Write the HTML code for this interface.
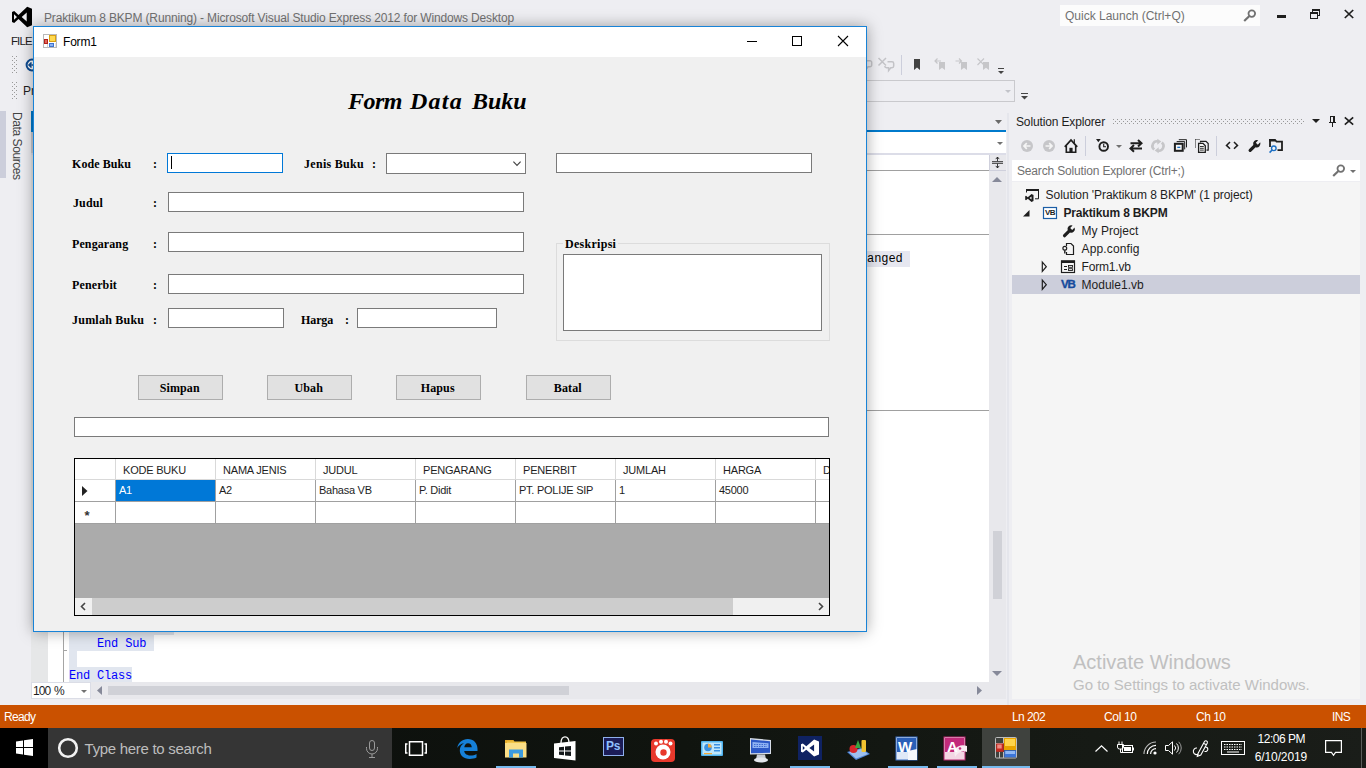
<!DOCTYPE html>
<html>
<head>
<meta charset="utf-8">
<title>Praktikum 8 BKPM</title>
<style>
html,body{margin:0;padding:0;}
body{width:1366px;height:768px;overflow:hidden;position:relative;background:#eeeef2;font-family:"Liberation Sans",sans-serif;font-size:12px;color:#1e1e1e;}
.a{position:absolute;}
.t{position:absolute;white-space:nowrap;line-height:1;}
.ui{font-family:"Liberation Sans",sans-serif;}
.serif{font-family:"Liberation Serif",serif;}
.mono{font-family:"Liberation Mono",monospace;}
svg{position:absolute;overflow:visible;}
/* form */
#form{position:absolute;left:33px;top:26px;width:832px;height:604px;border:1px solid #1883d7;background:#f0f0f0;box-shadow:0 0 14px rgba(0,0,0,.35);}
#ftitle{position:absolute;left:0;top:0;width:832px;height:30px;background:#fff;}
.tb{position:absolute;background:#fff;border:1px solid #7a7a7a;box-sizing:border-box;}
.lbl{position:absolute;white-space:nowrap;line-height:1;font-family:"Liberation Serif",serif;font-weight:bold;font-size:12px;color:#000;}
.btn{position:absolute;box-sizing:border-box;background:#e1e1e1;border:1px solid #adadad;font-family:"Liberation Serif",serif;font-weight:bold;font-size:12px;color:#000;text-align:center;line-height:24px;padding-right:1.500px;letter-spacing:0.100px;}
.gh{position:absolute;top:0;height:21px;box-sizing:border-box;border-right:1px solid #a0a0a0;border-bottom:1px solid #a0a0a0;background:#fff;font-size:11px;line-height:22.500px;padding-left:7px;letter-spacing:-0.200px;white-space:nowrap;overflow:hidden;}
.gc{position:absolute;height:22px;box-sizing:border-box;border-right:1px solid #a0a0a0;border-bottom:1px solid #a0a0a0;background:#fff;font-size:11px;line-height:21.500px;padding-left:3px;letter-spacing:-0.250px;white-space:nowrap;overflow:hidden;}
</style>
</head>
<body>
<!-- ===== IDE chrome ===== -->
<div id="ide">
<svg style="left:0;top:0" width="40" height="30" viewBox="0 0 40 30"><path d="M27.200 6.700 L32 8.800 V25.200 L27.200 27.300 L18.500 19.100 L14.200 22.900 L12 21.900 V12.100 L14.200 11.100 L18.500 14.900 Z M26.700 12.400 L21.700 17 L26.700 21.600 Z M14 14.200 V19.800 L17 17 Z" fill="#000" fill-rule="evenodd"/></svg>
<div class="t ui" id="vstitle" style="left:44px;top:12px;font-size:12px;color:#717171;letter-spacing:-0.148px;">Praktikum 8 BKPM (Running) - Microsoft Visual Studio Express 2012 for Windows Desktop</div>
<div class="a" style="left:1060px;top:5px;width:200px;height:21px;background:#fcfcfc;"></div>
<div class="t ui" id="ql" style="left:1065px;top:10px;font-size:12px;color:#717171;">Quick Launch (Ctrl+Q)</div>
<svg style="left:1243px;top:9px" width="14" height="13" viewBox="0 0 14 13"><circle cx="8.8" cy="4.6" r="3.3" fill="none" stroke="#717171" stroke-width="1.8"/><path d="M6.4 7 L1.2 12" stroke="#717171" stroke-width="2.2"/></svg>
<div class="a" style="left:1277px;top:15px;width:9px;height:3px;background:#1e1e1e;"></div>
<svg style="left:1310px;top:9px" width="10" height="10" viewBox="0 0 10 10" shape-rendering="crispEdges"><path d="M2.5 2.5 V0.5 H9.5 V6.5 H7.5" fill="none" stroke="#1e1e1e"/><rect x="2" y="0" width="8" height="2" fill="#1e1e1e"/><rect x="0.5" y="3.5" width="7" height="6" fill="none" stroke="#1e1e1e"/><rect x="0" y="3" width="8" height="2" fill="#1e1e1e"/></svg>
<svg style="left:1344px;top:10px" width="10" height="8" viewBox="0 0 10 8"><path d="M0.8 0 L9.2 8 M9.2 0 L0.8 8" stroke="#1e1e1e" stroke-width="1.7"/></svg>
<div class="t ui" style="left:11px;top:35.500px;font-size:11.500px;color:#1e1e1e;letter-spacing:-0.900px;">FILE</div>
<svg style="left:12px;top:56px" width="5" height="18" viewBox="0 0 5 18"><defs><pattern id="gp1" width="4" height="4" patternUnits="userSpaceOnUse"><rect x="0" y="0" width="1" height="1" fill="#999"/><rect x="2" y="2" width="1" height="1" fill="#999"/></pattern></defs><rect width="5" height="18" fill="url(#gp1)"/></svg>
<svg style="left:12px;top:82px" width="5" height="18" viewBox="0 0 5 18"><defs><pattern id="gp2" width="4" height="4" patternUnits="userSpaceOnUse"><rect x="0" y="0" width="1" height="1" fill="#999"/><rect x="2" y="2" width="1" height="1" fill="#999"/></pattern></defs><rect width="5" height="18" fill="url(#gp2)"/></svg>
<svg style="left:25px;top:58px" width="14" height="14" viewBox="0 0 14 14"><circle cx="7" cy="7" r="5.400" fill="#fff" stroke="#0e4c92" stroke-width="2"/><path d="M10 7 H4 M6.5 4.5 L4 7 L6.5 9.5" stroke="#0e4c92" stroke-width="1.6" fill="none"/></svg>
<div class="t ui" style="left:23px;top:85px;font-size:12px;color:#1e1e1e;">Pr</div>
<svg style="left:866px;top:55px" width="150" height="22" viewBox="866 55 150 22">
<path d="M866 60.800 H870 a1.700 1.700 0 0 1 1.700 1.700 V65 a1.700 1.700 0 0 1 -1.700 1.700 H868 L866 69.500" fill="none" stroke="#c3c3c7" stroke-width="1.500"/>
<path d="M878.500 58 L886 65.500 M886 58 L878.500 65.500" stroke="#c3c3c7" stroke-width="1.500" fill="none"/>
<path d="M887.500 61.800 H892 a1.700 1.700 0 0 1 1.700 1.700 V66 a1.700 1.700 0 0 1 -1.700 1.700 H890.800 L888.600 70.500 V67.700 H886.500 a1.700 1.700 0 0 1 -1.700 -1.700" fill="none" stroke="#c3c3c7" stroke-width="1.500"/>
<rect x="901" y="55" width="1" height="20" fill="#cccedb"/>
<path d="M914 59 H920 V70 L917 67.5 L914 70 Z" fill="#424242"/>
<path d="M939 62 H945 V70 L942 67.8 L939 70 Z" fill="#c6c6c9"/><path d="M941 61 H935.5 M937.5 58.5 L935 61 L937.5 63.5" stroke="#c6c6c9" stroke-width="1.2" fill="none"/>
<path d="M961 62 H967 V70 L964 67.8 L961 70 Z" fill="#c6c6c9"/><path d="M955.5 61 H961 M959 58.5 L961.5 61 L959 63.5" stroke="#c6c6c9" stroke-width="1.2" fill="none"/>
<path d="M983 62 H989 V70 L986 67.8 L983 70 Z" fill="#c6c6c9"/><path d="M977.5 58.5 L984 65 M984 58.5 L977.5 65" stroke="#c6c6c9" stroke-width="1.1" fill="none"/>
<rect x="998" y="68" width="6" height="1" fill="#444"/><path d="M998 71 H1004 L1001 74 Z" fill="#444"/>
</svg>
<div class="a" style="left:40px;top:80px;width:975px;height:22px;box-sizing:border-box;border:1px solid #c9c9cd;background:#eeeef2;"></div>
<svg style="left:1005px;top:90px" width="6" height="3" viewBox="0 0 6 3"><path d="M0 0 H6 L3 3 Z" fill="#c2c3c9"/></svg>
<svg style="left:1021px;top:93px" width="7" height="7" viewBox="0 0 7 7"><rect x="0" y="0" width="7" height="1" fill="#444"/><path d="M0 3 H7 L3.5 6.5 Z" fill="#444"/></svg>
<div class="a" style="left:0;top:111px;width:6px;height:67px;background:#cccedb;"></div>
<div class="t ui" id="ds" style="left:9px;top:112px;font-size:12px;color:#444;transform-origin:0 0;transform:translate(14px,0) rotate(90deg);letter-spacing:-0.420px;">Data Sources</div>
<div class="a" style="left:31px;top:111px;width:3px;height:20px;background:#007acc;"></div>
<div class="a" style="left:31px;top:130px;width:975px;height:2px;background:#007acc;"></div>
<svg style="left:995px;top:120px" width="7" height="4" viewBox="0 0 7 4"><path d="M0 0 H7 L3.500 4 Z" fill="#6a6a6a"/></svg>
<div class="a" style="left:31px;top:132px;width:975px;height:21px;background:#fff;"></div>
<div class="a" style="left:31px;top:153px;width:975px;height:2px;background:#dcdde8;"></div>
<svg style="left:997px;top:142px" width="6" height="3" viewBox="0 0 6 3"><path d="M0 0 H6 L3 3 Z" fill="#717171"/></svg>
<div class="a" id="editor" style="left:31px;top:155px;width:958px;height:527px;background:#fff;"></div>
<div class="a" style="left:31px;top:155px;width:17px;height:527px;background:#e6e7e8;"></div>
<div class="a" style="left:48px;top:170px;width:941px;height:1px;background:#a0a0a0;"></div>
<div class="a" style="left:48px;top:234px;width:941px;height:1px;background:#a0a0a0;"></div>
<div class="a" style="left:48px;top:410px;width:941px;height:1px;background:#a0a0a0;"></div>
<div class="a" style="left:860px;top:251px;width:50px;height:16px;background:#e6e7f0;"></div>
<div class="t mono" style="left:867px;top:253px;font-size:12px;color:#000;letter-spacing:-0.050px;">anged</div>
<div class="a" style="left:63px;top:600px;width:1px;height:82px;background:#a5a5a5;"></div>
<div class="a" style="left:63px;top:650px;width:4px;height:1px;background:#a5a5a5;"></div>
<div class="a" style="left:69px;top:625px;width:105px;height:10px;background:#e1e6ef;"></div>
<div class="a" style="left:69px;top:635px;width:85px;height:16px;background:#e1e6ef;"></div>
<div class="a" style="left:69px;top:651px;width:8px;height:16px;background:#e1e6ef;"></div>
<div class="a" style="left:69px;top:667px;width:63px;height:15px;background:#e1e6ef;"></div>
<div class="t mono" style="left:97px;top:638px;font-size:12px;color:#0000ff;letter-spacing:-0.150px;">End Sub</div>
<div class="t mono" style="left:69px;top:670px;font-size:12px;color:#0000ff;letter-spacing:-0.200px;">End Class</div>
<div class="a" style="left:989px;top:155px;width:17px;height:527px;background:#e8e8ec;"></div>
<svg style="left:992px;top:155px" width="11" height="15" viewBox="0 0 13 15"><path d="M0 6.5 H13 M0 8.5 H13 M6.5 1 V6 M6.5 9 V14" stroke="#1e1e1e" fill="none"/><path d="M4.5 3.5 L6.5 1 L8.5 3.5 M4.5 11.5 L6.5 14 L8.5 11.5" stroke="#1e1e1e" fill="none"/></svg>
<svg style="left:992px;top:177px" width="10" height="5" viewBox="0 0 10 5"><path d="M0 5 H10 L5 0 Z" fill="#868999"/></svg>
<div class="a" style="left:993px;top:531px;width:9px;height:68px;background:#d0d1d7;"></div>
<svg style="left:992px;top:671px" width="10" height="5" viewBox="0 0 10 5"><path d="M0 0 H10 L5 5 Z" fill="#868999"/></svg>
<div class="a" style="left:31px;top:682px;width:975px;height:17px;background:#e8e8ec;"></div>
<div class="a" style="left:31px;top:682px;width:60px;height:17px;background:#fff;border:1px solid #dbdde6;box-sizing:border-box;"></div>
<div class="t ui" style="left:33px;top:685px;font-size:12px;color:#1e1e1e;letter-spacing:-0.950px;word-spacing:1.500px;">100 %</div>
<svg style="left:81px;top:690px" width="6" height="3" viewBox="0 0 6 3"><path d="M0 0 H6 L3 3 Z" fill="#717171"/></svg>
<svg style="left:97px;top:686px" width="5" height="9" viewBox="0 0 5 9"><path d="M5 0 V9 L0 4.5 Z" fill="#868999"/></svg>
<div class="a" style="left:108px;top:686px;width:461px;height:9px;background:#d0d1d7;"></div>
<svg style="left:977px;top:686px" width="5" height="9" viewBox="0 0 5 9"><path d="M0 0 V9 L5 4.5 Z" fill="#868999"/></svg>
<div class="t ui" id="se_t" style="left:1016px;top:116px;font-size:12px;color:#1e1e1e;letter-spacing:-0.140px;">Solution Explorer</div>
<svg style="left:1113px;top:119px" width="191" height="5" viewBox="0 0 191 5"><defs><pattern id="gp3" width="4" height="4" patternUnits="userSpaceOnUse"><rect x="0" y="0" width="1" height="1" fill="#999"/><rect x="2" y="2" width="1" height="1" fill="#999"/></pattern></defs><rect width="191" height="5" fill="url(#gp3)"/></svg>
<svg style="left:1312px;top:119px" width="8" height="4" viewBox="0 0 8 4"><path d="M0 0 H8 L4 4 Z" fill="#1e1e1e"/></svg>
<svg style="left:1329px;top:116px" width="8" height="11" viewBox="0 0 8 11" shape-rendering="crispEdges"><rect x="1" y="0" width="5" height="1" fill="#1e1e1e"/><rect x="1" y="0" width="1" height="6" fill="#1e1e1e"/><rect x="4" y="0" width="2" height="6" fill="#1e1e1e"/><rect x="0" y="6" width="7" height="1" fill="#1e1e1e"/><rect x="3" y="7" width="1" height="4" fill="#1e1e1e"/></svg>
<svg style="left:1344px;top:117px" width="10" height="8" viewBox="0 0 10 8"><path d="M0.800 0.300 L9.200 7.700 M9.200 0.300 L0.800 7.700" stroke="#1e1e1e" stroke-width="1.600"/></svg>
<svg style="left:1012px;top:134px" width="300" height="24" viewBox="1012 135 300 24">
<circle cx="1027" cy="147" r="6" fill="#c6c6c9"/><path d="M1030.500 147 H1024 M1026.800 144.200 L1024 147 L1026.800 149.800" stroke="#f5f5f5" stroke-width="1.700" fill="none"/>
<circle cx="1049" cy="147" r="6" fill="#c6c6c9"/><path d="M1045.500 147 H1052 M1049.200 144.200 L1052 147 L1049.200 149.800" stroke="#f5f5f5" stroke-width="1.700" fill="none"/>
<path d="M1064.800 147.800 L1071 141 L1077.200 147.800" stroke="#1e1e1e" stroke-width="1.800" fill="none"/><path d="M1066.300 147 V153.300 H1075.700 V147" stroke="#1e1e1e" stroke-width="1.600" fill="none"/><rect x="1069.400" y="148.800" width="3.200" height="4.500" fill="#1e1e1e"/><path d="M1074.300 140.300 V144" stroke="#1e1e1e" stroke-width="1.200"/>
<rect x="1085" y="137" width="1" height="20" fill="#cccedb"/>
<circle cx="1103.700" cy="147.500" r="4.300" fill="none" stroke="#1e1e1e" stroke-width="1.900"/><path d="M1103.700 144.800 V147.700 H1106" stroke="#1e1e1e" stroke-width="1.100" fill="none"/><path d="M1096 140 H1100.700 L1098.350 143.300 Z" fill="#1e1e1e"/>
<path d="M1116 146 H1122 L1119 149 Z" fill="#717171"/>
<path d="M1130.500 144.200 H1141 M1138 140.900 L1141.500 144.200 L1138 147.500" stroke="#1e1e1e" stroke-width="2" fill="none"/><path d="M1142 149.400 H1131 M1134 146.100 L1130.500 149.400 L1134 152.700" stroke="#1e1e1e" stroke-width="2" fill="none"/>
<path d="M1154.200 150.500 A4.600 4.600 0 0 1 1158 142.400" stroke="#c6c6c9" stroke-width="2.600" fill="none"/><path d="M1161.800 143.500 A4.600 4.600 0 0 1 1158 151.600" stroke="#c6c6c9" stroke-width="2.600" fill="none"/><path d="M1157.300 139.800 L1161.300 142.600 L1157.300 145.800 Z" fill="#c6c6c9"/><path d="M1158.700 148.200 L1154.700 151.400 L1158.700 154.200 Z" fill="#c6c6c9"/>
<path d="M1178.800 140.700 H1186.500 V148.400" stroke="#1e1e1e" stroke-width="1" fill="none"/><path d="M1176.700 142.600 H1184.700 V150.400" stroke="#1e1e1e" stroke-width="1" fill="none"/><rect x="1174.900" y="144.800" width="7.800" height="7" fill="#f5f5f5" stroke="#1e1e1e" stroke-width="2"/><rect x="1177.300" y="147.700" width="3" height="1.300" fill="#1c6fc4"/>
<path d="M1195.500 140.500 H1200" stroke="#1e1e1e" stroke-dasharray="1 1" fill="none"/><path d="M1195.500 140.500 V149" stroke="#1e1e1e" stroke-dasharray="1 1" fill="none"/>
<path d="M1200.500 143.500 V142.300 H1206 L1208.200 144.500 V151.200 H1206.500" stroke="#1e1e1e" stroke-width="1.200" fill="none"/><path d="M1198.600 144.400 H1203 L1205.300 146.700 V153.300 H1198.600 Z" stroke="#1e1e1e" stroke-width="1.300" fill="#f5f5f5"/><path d="M1200 147.500 H1203.800 M1200 149.300 H1203.800 M1200 151.100 H1203.800" stroke="#1e1e1e" stroke-width="0.900" fill="none"/>
<rect x="1216" y="137" width="1" height="20" fill="#cccedb"/>
<path d="M1230 143 L1226.500 146.400 L1230 149.800 M1234 143 L1237.500 146.400 L1234 149.800" stroke="#1e1e1e" stroke-width="1.500" fill="none"/>
<path d="M1258.200 141.300 a3.700 3.700 0 0 0 -4.900 4.600 L1249 150.200 a1.600 1.600 0 0 0 2.300 2.300 L1255.600 148.200 a3.700 3.700 0 0 0 4.600 -4.900 L1257.800 145.700 L1255.800 143.700 Z" fill="#1e1e1e"/>
<path d="M1273 141 H1270 V148" stroke="#1e1e1e" stroke-width="1.800" fill="none"/><path d="M1269.100 141 H1275 L1276.500 142.600 H1282 V151.200 H1277.500" stroke="#1e1e1e" stroke-width="1.800" fill="none"/><rect x="1269.100" y="140.100" width="6" height="2.400" fill="#1e1e1e"/><circle cx="1273.800" cy="149.300" r="2.300" fill="#f5f5f5" stroke="#1c6fc4" stroke-width="1.400"/><path d="M1272.100 151 L1269.600 153.600" stroke="#1c6fc4" stroke-width="1.600"/>
</svg>
<div class="a" style="left:1012px;top:160px;width:348px;height:21px;background:#fff;"></div>
<div class="t ui" id="se_s" style="left:1017px;top:165px;font-size:12px;color:#717171;letter-spacing:-0.165px;">Search Solution Explorer (Ctrl+;)</div>
<svg style="left:1332px;top:164px" width="14" height="13" viewBox="0 0 14 13"><circle cx="8.8" cy="4.600" r="3.300" fill="none" stroke="#717171" stroke-width="1.800"/><path d="M6.400 7 L1.200 12" stroke="#717171" stroke-width="2.200"/></svg>
<svg style="left:1350px;top:170px" width="6" height="3" viewBox="0 0 6 3"><path d="M0 0 H6 L3 3 Z" fill="#717171"/></svg>
<div class="a" style="left:1012px;top:182px;width:348px;height:517px;background:#f5f5f5;"></div>
<div class="a" style="left:1012px;top:275px;width:348px;height:19px;background:#cccedb;"></div>
<svg style="left:1012px;top:186px" width="100" height="110" viewBox="1012 186 100 110">
<path d="M1026.500 192.500 V189.500 H1038.500 V198.800 H1035" stroke="#1e1e1e" stroke-width="1" fill="none"/><rect x="1026" y="189" width="13" height="2" fill="#1e1e1e"/>
<path d="M1031.500 194 L1033.500 195 V201 L1031.500 202 L1027.800 198.800 L1026 200.200 L1025.200 199.800 V196.200 L1026 195.800 L1027.800 197.200 Z M1031.500 196.500 L1029.500 198 L1031.500 199.500 Z" fill="#1e1e1e" fill-rule="evenodd"/>
<path d="M1029.500 210 V216.500 H1023 Z" fill="#1e1e1e"/>
<rect x="1043.500" y="207.500" width="13" height="11" fill="#fff" stroke="#1b5ea6" stroke-width="1.200"/>
<path d="M1063 284 l0 0" />
<path transform="translate(-185.600,84.300)" d="M1258.200 141.300 a3.700 3.700 0 0 0 -4.900 4.600 L1249 150.200 a1.600 1.600 0 0 0 2.300 2.300 L1255.600 148.200 a3.700 3.700 0 0 0 4.600 -4.900 L1257.800 145.700 L1255.800 143.700 Z" fill="#1e1e1e"/>
<path d="M1066.500 246 V243.500 H1071 L1073.500 246 V254.500 H1066.500 V252" stroke="#1e1e1e" stroke-width="1.200" fill="none"/><circle cx="1064.800" cy="248.300" r="1.900" fill="none" stroke="#1e1e1e" stroke-width="1.200"/><path d="M1064.800 250.200 V253.500" stroke="#1e1e1e" stroke-width="1.400"/>
<path d="M1042.300 262 V271.300 L1046.300 266.650 Z" stroke="#1e1e1e" stroke-width="1.200" fill="none"/>
<rect x="1061.500" y="261" width="13" height="11.500" fill="none" stroke="#1e1e1e" stroke-width="1.200"/><rect x="1061" y="260.500" width="14" height="2.500" fill="#1e1e1e"/><path d="M1064 266.500 H1067 M1064 269.500 H1067" stroke="#1e1e1e" stroke-width="1.200"/><rect x="1068.500" y="265.500" width="4" height="1.800" fill="none" stroke="#1e1e1e" stroke-width="0.900"/><rect x="1068.500" y="268.700" width="4" height="1.800" fill="none" stroke="#1e1e1e" stroke-width="0.900"/>
<path d="M1042.300 280 V289.300 L1046.300 284.650 Z" stroke="#1e1e1e" stroke-width="1.200" fill="none"/>
</svg>
<div class="t ui" style="left:1045px;top:209px;font-size:8px;font-weight:bold;color:#1e1e1e;letter-spacing:-0.5px;">VB</div>
<div class="t ui" style="left:1061px;top:279px;font-size:11.500px;font-weight:bold;color:#164a9c;-webkit-text-stroke:0.350px #164a9c;letter-spacing:-1.100px;">VB</div>
<div class="t ui" id="tr1" style="left:1045.600px;top:189px;font-size:12px;color:#1e1e1e;letter-spacing:-0.056px;">Solution 'Praktikum 8 BKPM' (1 project)</div>
<div class="t ui" id="tr2" style="left:1063.400px;top:207px;font-size:12px;font-weight:bold;color:#1e1e1e;letter-spacing:-0.160px;">Praktikum 8 BKPM</div>
<div class="t ui" id="tr3" style="left:1081.600px;top:225px;font-size:12px;color:#1e1e1e;">My Project</div>
<div class="t ui" id="tr4" style="left:1081.600px;top:243px;font-size:12px;color:#1e1e1e;letter-spacing:0.120px;">App.config</div>
<div class="t ui" id="tr5" style="left:1081.600px;top:261px;font-size:12px;color:#1e1e1e;letter-spacing:-0.200px;">Form1.vb</div>
<div class="t ui" id="tr6" style="left:1081.600px;top:279px;font-size:12px;color:#1e1e1e;">Module1.vb</div>
<div class="t ui" id="aw1" style="left:1073px;top:652px;font-size:20px;color:#c0c0c0;">Activate Windows</div>
<div class="t ui" id="aw2" style="left:1073px;top:677px;font-size:15px;color:#c0c0c0;">Go to Settings to activate Windows.</div>
</div>
<div class="a" style="left:31px;top:132px;width:2px;height:21px;background:#c9cad0;"></div>
<div class="a" style="left:1007px;top:113px;width:2px;height:592px;background:#e5e6ec;"></div>
<div class="a" style="left:989px;top:155px;width:1px;height:16px;background:#cfd0dc;"></div>
<div class="a" style="left:989px;top:170px;width:17px;height:1px;background:#cfd0dc;"></div>
<!-- ===== Form window ===== -->
<div id="form">
<div id="ftitle"></div>
<svg style="left:9px;top:7px" width="14" height="14" viewBox="0 0 14 14">
<rect x="0.5" y="0.5" width="13" height="13" fill="#fff" stroke="#b9b9b9"/>
<rect x="6" y="1" width="7" height="7" fill="#d9a013"/><rect x="7" y="2" width="5" height="5" fill="#ffd94f"/>
<rect x="1" y="5" width="4" height="5" fill="#b3221a"/><rect x="2" y="6" width="2" height="3" fill="#e0655c"/>
<rect x="6" y="9" width="5" height="4" fill="#3f73cf"/><rect x="7" y="10" width="3" height="2" fill="#8db3f0"/>
<rect x="4" y="10" width="1" height="3" fill="#d0d0d0"/><rect x="12" y="9" width="1" height="4" fill="#e4e4e4"/>
</svg>
<div class="t ui" style="left:29px;top:9px;font-size:12px;color:#000;letter-spacing:-0.2px;">Form1</div>
<svg style="left:706px;top:3px" width="120" height="24" viewBox="740 30 120 24" shape-rendering="crispEdges">
<rect x="747" y="41" width="10" height="1" fill="#000"/>
<rect x="792.5" y="36.5" width="9" height="9" fill="none" stroke="#000" stroke-width="1"/>
<path d="M838 36 L848 46 M848 36 L838 46" stroke="#000" stroke-width="1.1" fill="none" shape-rendering="geometricPrecision"/>
</svg>
<div class="a serif" id="heading" style="left:0;top:61.500px;width:832px;height:30px;font-size:24px;font-weight:bold;font-style:italic;color:#000;line-height:1;white-space:nowrap;"><span class="a" id="h1" style="left:314px;top:0;letter-spacing:-0.5px;">Form</span> <span class="a" id="h2" style="left:376px;top:0;letter-spacing:1.25px;">Data</span> <span class="a" id="h3" style="left:438px;top:0;letter-spacing:0px;">Buku</span></div>
<div class="lbl" style="left:38px;top:131px;letter-spacing:0.07px;">Kode Buku</div>
<div class="lbl" style="left:119px;top:131px;">:</div>
<div class="lbl" style="left:270px;top:131px;letter-spacing:0.30px;">Jenis Buku</div>
<div class="lbl" style="left:338px;top:131px;">:</div>
<div class="lbl" style="left:39px;top:170px;letter-spacing:0.12px;">Judul</div>
<div class="lbl" style="left:119px;top:170px;">:</div>
<div class="lbl" style="left:38px;top:211px;letter-spacing:0.10px;">Pengarang</div>
<div class="lbl" style="left:119px;top:211px;">:</div>
<div class="lbl" style="left:38px;top:252px;letter-spacing:0.12px;">Penerbit</div>
<div class="lbl" style="left:119px;top:252px;">:</div>
<div class="lbl" style="left:38px;top:287px;letter-spacing:0.23px;">Jumlah Buku</div>
<div class="lbl" style="left:119px;top:287px;">:</div>
<div class="lbl" style="left:267px;top:287px;letter-spacing:-0.10px;">Harga</div>
<div class="lbl" style="left:311px;top:287px;">:</div>
<div class="tb" style="left:133px;top:126px;width:116px;height:20px;border-color:#0078d7;"></div>
<div class="a" style="left:137px;top:129px;width:1px;height:13px;background:#000;"></div>
<div class="tb" style="left:352px;top:126px;width:140px;height:21px;"></div>
<svg style="left:478.500px;top:134px" width="8" height="6" viewBox="0 0 8 6"><path d="M0.400 0.600 L4 4.400 L7.600 0.600" stroke="#444" stroke-width="1.150" fill="none"/></svg>
<div class="tb" style="left:522px;top:126px;width:256px;height:20px;"></div>
<div class="tb" style="left:134px;top:165px;width:356px;height:20px;"></div>
<div class="tb" style="left:134px;top:205px;width:356px;height:20px;"></div>
<div class="tb" style="left:134px;top:247px;width:356px;height:20px;"></div>
<div class="tb" style="left:134px;top:281px;width:116px;height:20px;"></div>
<div class="tb" style="left:323px;top:281px;width:140px;height:20px;"></div>
<div class="a" style="left:522px;top:216px;width:274px;height:98px;border:1px solid #dcdcdc;box-sizing:border-box;"></div>
<div class="lbl" style="left:529px;top:211px;background:#f0f0f0;padding:0 2px;letter-spacing:0.28px;">Deskripsi</div>
<div class="tb" style="left:529px;top:227px;width:259px;height:77px;"></div>
<div class="btn" style="left:104px;top:348px;width:85px;height:25px;">Simpan</div>
<div class="btn" style="left:233px;top:348px;width:85px;height:25px;">Ubah</div>
<div class="btn" style="left:362px;top:348px;width:85px;height:25px;">Hapus</div>
<div class="btn" style="left:492px;top:348px;width:85px;height:25px;">Batal</div>
<div class="tb" style="left:40px;top:390px;width:755px;height:20px;"></div>
<div class="a" id="grid" style="left:40px;top:431px;width:756px;height:158px;box-sizing:border-box;border:1px solid #000;background:#ababab;overflow:hidden;">
<div class="gh" style="left:0;width:41px;border-color:#d9d9d9;"></div>
<div class="gh" style="left:41px;width:100px;border-color:#d9d9d9;">KODE BUKU</div>
<div class="gh" style="left:141px;width:100px;border-color:#d9d9d9;">NAMA JENIS</div>
<div class="gh" style="left:241px;width:100px;border-color:#d9d9d9;">JUDUL</div>
<div class="gh" style="left:341px;width:100px;border-color:#d9d9d9;">PENGARANG</div>
<div class="gh" style="left:441px;width:100px;border-color:#d9d9d9;">PENERBIT</div>
<div class="gh" style="left:541px;width:100px;border-color:#d9d9d9;">JUMLAH</div>
<div class="gh" style="left:641px;width:100px;border-color:#d9d9d9;">HARGA</div>
<div class="gh" style="left:741px;width:100px;border-color:#d9d9d9;">DESKRIPSI</div>
<div class="gc" style="left:0;top:21px;width:41px;"></div>
<div class="gc" style="left:0;top:43px;width:41px;"></div>
<div class="gc" style="left:41px;top:21px;width:100px;background:#0078d7;color:#fff;">A1</div>
<div class="gc" style="left:41px;top:43px;width:100px;"></div>
<div class="gc" style="left:141px;top:21px;width:100px;">A2</div>
<div class="gc" style="left:141px;top:43px;width:100px;"></div>
<div class="gc" style="left:241px;top:21px;width:100px;">Bahasa VB</div>
<div class="gc" style="left:241px;top:43px;width:100px;"></div>
<div class="gc" style="left:341px;top:21px;width:100px;">P. Didit</div>
<div class="gc" style="left:341px;top:43px;width:100px;"></div>
<div class="gc" style="left:441px;top:21px;width:100px;">PT. POLIJE SIP</div>
<div class="gc" style="left:441px;top:43px;width:100px;"></div>
<div class="gc" style="left:541px;top:21px;width:100px;">1</div>
<div class="gc" style="left:541px;top:43px;width:100px;"></div>
<div class="gc" style="left:641px;top:21px;width:100px;">45000</div>
<div class="gc" style="left:641px;top:43px;width:100px;"></div>
<div class="gc" style="left:741px;top:21px;width:100px;"></div>
<div class="gc" style="left:741px;top:43px;width:100px;"></div>
<svg style="left:7px;top:27px" width="6" height="10" viewBox="0 0 6 10"><path d="M0 0 L5.5 5 L0 10 Z" fill="#222"/></svg>
<div class="t" style="left:9.500px;top:50px;font-size:13px;font-weight:bold;color:#333;">*</div>
<div class="a" style="left:0;top:139px;width:754px;height:17px;background:#f0f0f0;"></div>
<div class="a" style="left:17px;top:139px;width:641px;height:17px;background:#cdcdcd;"></div>
<svg style="left:5px;top:143px" width="6" height="9" viewBox="0 0 6 9"><path d="M5 1 L1.5 4.5 L5 8" stroke="#444" stroke-width="1.6" fill="none"/></svg>
<svg style="left:743px;top:143px" width="6" height="9" viewBox="0 0 6 9"><path d="M1 1 L4.5 4.5 L1 8" stroke="#444" stroke-width="1.6" fill="none"/></svg>
</div>
</div>
<!-- ===== status bar ===== -->
<div class="a" id="status" style="left:0;top:705px;width:1366px;height:23px;background:#ca5100;"><div class="t ui" id="st0" style="left:4px;top:6px;font-size:12px;color:#fff;letter-spacing:-0.680px;">Ready</div>
<div class="t ui" id="st1" style="left:1012px;top:6px;font-size:12px;color:#fff;letter-spacing:-0.600px;">Ln 202</div>
<div class="t ui" id="st2" style="left:1104px;top:6px;font-size:12px;color:#fff;letter-spacing:-0.330px;">Col 10</div>
<div class="t ui" id="st3" style="left:1196px;top:6px;font-size:12px;color:#fff;letter-spacing:-0.500px;">Ch 10</div>
<div class="t ui" id="st4" style="left:1332px;top:6px;font-size:12px;color:#fff;letter-spacing:-0.670px;">INS</div></div>
<!-- ===== taskbar ===== -->
<div class="a" id="taskbar" style="left:0;top:728px;width:1366px;height:40px;background:linear-gradient(90deg,#0a0d0b 0%,#10140f 50%,#161a15 80%,#1a1d19 100%);"><div class="a" style="left:0;top:0;width:48px;height:40px;background:#000;"></div>
<svg style="left:16px;top:11px" width="17" height="17" viewBox="0 0 17 17"><path d="M0 2.400 L7 1.400 V8 H0 Z M8 1.250 L17 0 V8 H8 Z M0 9 H7 V15.600 L0 14.600 Z M8 9 H17 V17 L8 15.750 Z" fill="#fff"/></svg>
<div class="a" style="left:48px;top:0;width:344px;height:40px;background:#353535;"></div>
<svg style="left:57px;top:9px" width="22" height="22" viewBox="0 0 22 22"><circle cx="11" cy="11" r="8.800" fill="none" stroke="#f2f2f2" stroke-width="2.600"/></svg>
<div class="t ui" id="tk_s" style="left:84.600px;top:13px;font-size:15px;color:#bdbdbd;letter-spacing:-0.300px;">Type here to search</div>
<svg style="left:365px;top:12px" width="14" height="18" viewBox="0 0 14 18"><rect x="4.500" y="0.500" width="5" height="10" rx="2.500" fill="none" stroke="#9a9a9a" stroke-width="1"/><path d="M1.500 7 V8.500 a5.500 5.500 0 0 0 11 0 V7 M7 14 V17 M4 17.500 H10" fill="none" stroke="#9a9a9a" stroke-width="1"/></svg>
<svg style="left:405px;top:13px" width="22" height="15" viewBox="0 0 22 15"><rect x="4.500" y="0.750" width="13" height="13.500" fill="none" stroke="#fff" stroke-width="1.500"/><path d="M2.500 3 H0.750 V12 H2.500 M19.500 3 H21.250 V12 H19.500" fill="none" stroke="#fff" stroke-width="1.500"/></svg>
<svg style="left:457px;top:11px" width="21" height="20" viewBox="0 0 21 20"><path d="M0.300 9 C1 3.500 5.500 0 10.800 0 C16.500 0 20.500 4 20.500 10 V12 H7.200 C7.500 15 10.500 16.500 13.500 16.500 C15.800 16.500 17.800 15.900 19.500 14.900 V18.600 C17.500 19.600 15.300 20 12.800 20 C6.500 20 2.800 16.300 2.800 11.300 C2.800 8 4.500 5.600 7 4.300 C3.800 4.800 1.500 6.700 0.300 9 Z M7.300 8.300 H14.800 C14.700 5.800 13.200 4.200 11 4.200 C8.800 4.200 7.600 6 7.300 8.300 Z" fill="#1680d8" fill-rule="evenodd"/></svg>
<svg style="left:505px;top:11px" width="22" height="19" viewBox="0 0 22 19"><path d="M0 1 H8 L9.500 2.500 H21 V18 H0 Z" fill="#f3c84b"/><path d="M0 4 H21.500 V18.500 H0 Z" fill="#fbdf87"/><path d="M0 1 H8 L9.500 2.500 H2 V4 H0 Z" fill="#e6ad2b"/><rect x="4" y="10.500" width="14" height="8" fill="#3c9be0"/><rect x="8" y="14.500" width="6" height="4" fill="#fbdf87"/></svg>
<div class="a" style="left:496px;top:38px;width:40px;height:2px;background:#76b9ed;"></div>
<svg style="left:554px;top:8px" width="22" height="25" viewBox="0 0 22 25"><path d="M7 7 C7 2.500 9 0.800 11 0.800 C13 0.800 15 2.500 15 7" fill="none" stroke="#fff" stroke-width="1.300"/><path d="M0 7.500 L21.500 5 V24.500 L0 22 Z" fill="#fff"/><path d="M5 11.300 L10 10.700 V14.500 H5 Z M11 10.600 L17 9.900 V14.500 H11 Z M5 15.500 H10 V19.300 L5 18.700 Z M11 15.500 H17 V20.100 L11 19.400 Z" fill="#14181a"/></svg>
<div class="a" style="left:603px;top:9px;width:21px;height:19px;box-sizing:border-box;background:#1b1c57;border:1px solid #8fb0ec;"></div>
<div class="t ui" style="left:606px;top:12px;font-size:12px;font-weight:bold;color:#8fc0ff;letter-spacing:-0.3px;">Ps</div>
<svg style="left:651px;top:10px" width="24" height="24" viewBox="0 0 24 24"><rect x="0" y="1" width="24" height="23" rx="4" fill="#e8392c"/><circle cx="12" cy="14" r="7.500" fill="#fff"/><circle cx="12.500" cy="14.500" r="3.200" fill="#e8392c"/><circle cx="5" cy="5.500" r="2" fill="#fff"/><circle cx="10" cy="3.800" r="2" fill="#fff"/><circle cx="15" cy="3.800" r="2" fill="#fff"/><circle cx="19.500" cy="5.500" r="2" fill="#fff"/></svg>
<svg style="left:701px;top:13px" width="22" height="16" viewBox="0 0 22 16"><rect x="0" y="0" width="22" height="15" rx="1" fill="#4fb4f0"/><rect x="1.500" y="1.500" width="19" height="12" fill="#bfe6fb"/><circle cx="7" cy="6.500" r="3.800" fill="#3a8fe0"/><path d="M7 6.500 V2.700 A3.800 3.800 0 0 1 10.800 6.500 Z" fill="#f3a93b"/><rect x="13" y="3" width="6" height="1.500" fill="#3a8fe0"/><rect x="13" y="6" width="6" height="1.500" fill="#3a8fe0"/><rect x="13" y="9" width="6" height="1.500" fill="#3a8fe0"/><rect x="3" y="12" width="8" height="1.200" fill="#f3a93b"/></svg>
<svg style="left:748px;top:9px" width="25" height="26" viewBox="0 0 25 26"><path d="M2 1 L23 3 V17 L2 17.500 Z" fill="#d7dde6"/><path d="M3 2.500 L22 4.200 V15.800 L3 16.200 Z" fill="#2b58c6"/><path d="M4.500 5 L20.500 6.300 V11 L4.500 11 Z" fill="#8fb3f3"/><path d="M9 17.500 H17 L18 22 H8 Z" fill="#c9ced6"/><ellipse cx="13" cy="23" rx="7" ry="2.500" fill="#e4e7ec"/><path d="M6 7.500 H19 M6 9.500 H19" stroke="#2b58c6" stroke-width="0.800" stroke-dasharray="1.500 1"/></svg>
<div class="a" style="left:798px;top:8px;width:24px;height:24px;background:#0f2262;"></div>
<svg style="left:801px;top:11px" width="18" height="18" viewBox="0 0 22 21"><path d="M16 0 L22 2.500 V18.500 L16 21 L6.500 12.500 L2.200 16 L0 15 V6 L2.200 5 L6.500 8.500 Z M16 6.200 L10.200 10.500 L16 14.800 Z M2.200 8 V13 L4.800 10.500 Z" fill="#fff" fill-rule="evenodd"/></svg>
<div class="a" style="left:790px;top:38px;width:40px;height:2px;background:#76b9ed;"></div>
<svg style="left:847px;top:9px" width="23" height="24" viewBox="0 0 23 24"><path d="M0 15 L14 11 L23 17 L9 23 Z" fill="#4f86d9"/><path d="M2 15.200 L14 12 L21 17 L9 21.500 Z" fill="#9fc0ee"/><circle cx="6.500" cy="12" r="4" fill="#d8272b"/><path d="M11 3 L14 11 H8 Z" fill="#3aa542"/><rect x="14.500" y="3" width="4.500" height="12" rx="1" fill="#f2c230"/></svg>
<svg style="left:896px;top:9px" width="22" height="24" viewBox="0 0 22 24"><rect x="0" y="0" width="21" height="23" fill="#dfe9f7" stroke="#3b6fc2" stroke-width="1"/><rect x="1" y="1" width="19" height="14" fill="#2a5fb8"/><path d="M12 14 L21 12 V23 H12 Z" fill="#f4f7fc"/></svg>
<div class="t ui" style="left:898px;top:11px;font-size:15px;font-weight:bold;color:#fff;">W</div>
<div class="a" style="left:888px;top:38px;width:40px;height:2px;background:#76b9ed;"></div>
<svg style="left:944px;top:9px" width="23" height="24" viewBox="0 0 23 24"><rect x="0" y="0" width="21" height="23" fill="#f3d7e4" stroke="#b8256f" stroke-width="1"/><rect x="1" y="1" width="19" height="14" fill="#c22a7a"/><path d="M10 13 C13 9 18 7 23 9 V15 C19 13 14 15 11 20 Z" fill="#f8edf2"/><circle cx="16" cy="11.500" r="1.300" fill="#c22a7a"/></svg>
<div class="t ui" style="left:947px;top:11px;font-size:15px;font-weight:bold;color:#fff;">A</div>
<div class="a" style="left:937px;top:38px;width:40px;height:2px;background:#76b9ed;"></div>
<div class="a" style="left:982px;top:0;width:48px;height:40px;background:#3f423e;"></div>
<svg style="left:995px;top:9px" width="22" height="22" viewBox="0 0 22 22"><rect x="0.500" y="0.500" width="21" height="20.500" rx="1" fill="none" stroke="#bdbdbd"/><path d="M8.500 1 V6 M1 6.500 H8.500 M4.500 15 V21 M8.500 15 V21" stroke="#bdbdbd" fill="none"/><rect x="9" y="1" width="12" height="12" fill="#e9a400"/><rect x="10" y="2" width="10" height="7" fill="#ffd44a"/><rect x="1.200" y="6.500" width="7.500" height="8.300" fill="#c8281e"/><rect x="2.200" y="7.500" width="4.500" height="4" fill="#ef8a82"/><rect x="9.300" y="13.300" width="11.700" height="7" fill="#3d76d8"/><rect x="10.300" y="14" width="9.700" height="3" fill="#8fb8f5"/></svg>
<div class="a" style="left:982px;top:38px;width:48px;height:2px;background:#76b9ed;"></div>
<svg style="left:1095px;top:17px" width="13" height="7" viewBox="0 0 13 7"><path d="M0.500 6.500 L6.500 0.800 L12.500 6.500" fill="none" stroke="#fff" stroke-width="1.200"/></svg>
<svg style="left:1117px;top:13px" width="17" height="14" viewBox="0 0 17 14"><rect x="5.500" y="4.500" width="10" height="7" fill="none" stroke="#fff"/><rect x="7" y="6" width="7" height="4" fill="#fff"/><rect x="16" y="6.500" width="1" height="3" fill="#fff"/><path d="M2 0.500 V3 M5 0.500 V3 M0.500 3.500 H6.500 V6 a2 2 0 0 1 -2 2 H2.500 a2 2 0 0 1 -2 -2 Z M3.500 8 V11.500 H5.500" fill="none" stroke="#fff"/></svg>
<svg style="left:1143px;top:13px" width="15" height="14" viewBox="0 0 15 14"><path d="M1 13 A12 12 0 0 1 13 1" fill="none" stroke="#bbb" stroke-width="1.100"/><path d="M4.300 13 A8.700 8.700 0 0 1 13 4.300" fill="none" stroke="#fff" stroke-width="1.200"/><path d="M7.600 13 A5.400 5.400 0 0 1 13 7.600" fill="none" stroke="#fff" stroke-width="1.200"/><circle cx="12" cy="12" r="1.600" fill="#fff"/></svg>
<svg style="left:1165px;top:13px" width="17" height="14" viewBox="0 0 17 14"><path d="M0.500 4.500 H3.500 L7.500 0.800 V13.200 L3.500 9.500 H0.500 Z" fill="none" stroke="#fff"/><path d="M9.500 4.500 a3.500 3.500 0 0 1 0 5 M11.500 2.500 a6.300 6.300 0 0 1 0 9" fill="none" stroke="#fff"/><path d="M13.700 0.800 a8.800 8.800 0 0 1 0 12.400" fill="none" stroke="#999"/></svg>
<svg style="left:1192px;top:11px" width="18" height="18" viewBox="0 0 18 18"><path d="M6 14.500 L12.500 2.500 a1.600 1.600 0 0 1 2.800 1.500 L8.800 16 L5.300 17.300 Z M11.500 4.300 L14.300 5.800" fill="none" stroke="#fff" stroke-width="1.100"/><path d="M5 9 a3.300 3.300 0 1 0 1.500 6 M13 8 a2.300 2.300 0 1 1 -0.500 4.300" fill="none" stroke="#fff" stroke-width="1.100"/></svg>
<svg style="left:1221px;top:13px" width="24" height="14" viewBox="0 0 24 14"><rect x="0.500" y="0.500" width="23" height="13" fill="none" stroke="#fff"/><path d="M3 3.500 H21 M3 6 H21 M3 8.500 H21" stroke="#fff" stroke-width="1" stroke-dasharray="1.500 1"/><path d="M6 11 H18" stroke="#fff"/></svg>
<div class="t ui" id="tk_t" style="left:1257.600px;top:5px;font-size:12px;color:#fff;letter-spacing:-0.500px;">12:06 PM</div>
<div class="t ui" id="tk_d" style="left:1254.800px;top:23px;font-size:12px;color:#fff;letter-spacing:-0.130px;">6/10/2019</div>
<svg style="left:1325px;top:12px" width="17" height="17" viewBox="0 0 17 17"><path d="M0.600 0.600 H16.400 V12.400 H10.500 L8.500 15.300 L6.500 12.400 H0.600 Z" fill="none" stroke="#fff" stroke-width="1.200"/></svg>
<div class="a" style="left:1361px;top:0;width:1px;height:40px;background:#5a5e5b;"></div></div>
</body>
</html>
